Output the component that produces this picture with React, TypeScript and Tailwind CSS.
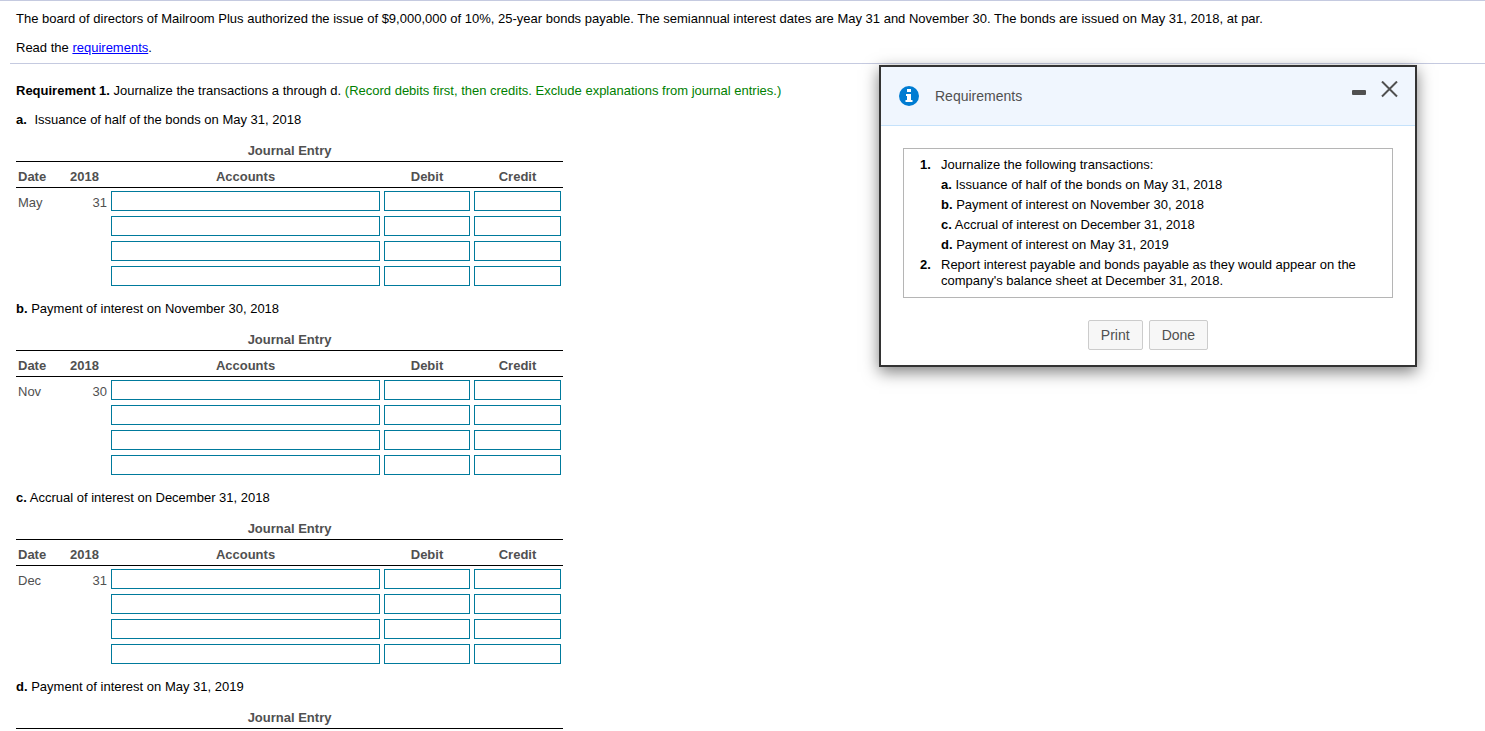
import { useState } from "react";

interface Transaction {
  letter: string;
  text: string;
  month?: string;
  day?: string;
}

// a transaction without a date only gets its title and table heading
const transactions: Transaction[] = [
  { letter: "a", text: "Issuance of half of the bonds on May 31, 2018", month: "May", day: "31" },
  { letter: "b", text: "Payment of interest on November 30, 2018", month: "Nov", day: "30" },
  { letter: "c", text: "Accrual of interest on December 31, 2018", month: "Dec", day: "31" },
  { letter: "d", text: "Payment of interest on May 31, 2019" },
];

const rows = [1, 2, 3, 4];
const columns = ["Account", "Debit", "Credit"];

function JournalEntry({ letter, text, month, day }: Transaction) {
  return (
    <section className="mb-[13px] last:mb-0">
      <h2>
        <b className={letter === "a" ? "mr-1" : ""}>{letter}.</b> {text}
      </h2>
      <table className="mt-[11px] w-[547px] table-fixed border-separate border-spacing-0 text-[#505050]">
        <colgroup>
          <col className="w-[52px]" />
          <col className="w-[41px]" />
          <col className="w-[273px]" />
          <col className="w-[90px]" />
          <col className="w-[91px]" />
        </colgroup>
        <thead>
          <tr>
            <th colSpan={5} className="h-[23px] border-b border-black px-0 pt-0.5 pb-0">
              Journal Entry
            </th>
          </tr>
          {month && (
            <tr>
              <th className="h-[26px] border-b border-black px-0.5 pt-1 text-left">Date</th>
              <th className="border-b border-black px-0.5 pt-1 text-left">2018</th>
              <th className="border-b border-black px-0.5 pt-1">Accounts</th>
              <th className="border-b border-black px-0.5 pt-1">Debit</th>
              <th className="border-b border-black px-0.5 pt-1">Credit</th>
            </tr>
          )}
        </thead>
        {month && (
          <tbody>
            {rows.map((row) => (
              <tr key={row}>
                <td className="h-[25px] px-0.5 pt-1 pb-0">{row === 1 && month}</td>
                <td className="px-0.5 pt-1 pb-0 text-right">{row === 1 && day}</td>
                {columns.map((column) => (
                  <td key={column} className="px-0.5 pt-[3px] pb-0.5">
                    <input
                      type="text"
                      aria-label={`${letter}. ${column}, line ${row}`}
                      className="block h-5 w-full border border-[#007a9c] bg-white px-1 text-black outline-none"
                    />
                  </td>
                ))}
              </tr>
            ))}
          </tbody>
        )}
      </table>
    </section>
  );
}

function RequirementsDialog({ onClose }: { onClose: () => void }) {
  return (
    <div
      role="dialog"
      aria-labelledby="dialog-title"
      className="absolute top-16 right-[68px] w-[538px] border-2 border-[#333] bg-white shadow-[0_5px_15px_rgba(0,0,0,0.5)]"
    >
      <header className="flex h-[59px] items-center border-b border-[#c5e2fb] bg-[#f0f6fe] pr-[17px] pl-[18px] text-[#505050]">
        <svg width="20" height="20" viewBox="0 0 20 20" aria-hidden="true">
          <circle cx="10" cy="10" r="10" fill="#007cd2" />
          <path d="M8 3h4v3H8zM7 8h5v6h1.5v2h-7v-2H8v-4H7z" fill="#fff" />
        </svg>
        <h2 id="dialog-title" className="ml-4 flex-1 text-sm">Requirements</h2>
        <button type="button" aria-label="Minimize" className="mr-[15px]">
          <svg width="14" height="20" viewBox="0 0 14 20">
            <rect x="0" y="4" width="14" height="5" rx="1" fill="#505050" />
          </svg>
        </button>
        <button type="button" aria-label="Close" onClick={onClose}>
          <svg width="17" height="30" viewBox="0 0 17 30">
            <path d="M1 0.5L16 15.5M16 0.5L1 15.5" stroke="#505050" strokeWidth="2" />
          </svg>
        </button>
      </header>
      <div className="px-[22px] pt-[22px] pb-[15px]">
        <ol className="border border-[#b5b5b5] px-4 py-2">
          <li className="flex">
            <b className="w-[21px] shrink-0">1.</b>
            <div className="space-y-1">
              <p>Journalize the following transactions:</p>
              {transactions.map(({ letter, text }) => (
                <p key={letter}>
                  <b>{letter}.</b> {text}
                </p>
              ))}
            </div>
          </li>
          <li className="mt-1 flex">
            <b className="w-[21px] shrink-0">2.</b>
            <p>
              Report interest payable and bonds payable as they would appear on the company's
              balance sheet at December 31, 2018.
            </p>
          </li>
        </ol>
        <div className="mt-[22px] flex justify-center gap-1.5 text-sm text-[#505050]">
          <button type="button" className="h-[30px] rounded-xs border border-[#ccc] bg-[#f7f7f7] px-3">
            Print
          </button>
          <button
            type="button"
            onClick={onClose}
            className="h-[30px] rounded-xs border border-[#ccc] bg-[#f7f7f7] px-3"
          >
            Done
          </button>
        </div>
      </div>
    </div>
  );
}

export default function App() {
  const [open, setOpen] = useState(true);

  return (
    <div className="relative min-h-screen border-t border-[#c5cae0] bg-white font-['Liberation_Sans',Arial,sans-serif] text-[13px] leading-4 text-black">
      <header className="ml-2.5 border-b border-[#c5cae0] px-1.5 pt-2.5 pb-[7px]">
        <p>
          The board of directors of Mailroom Plus authorized the issue of $9,000,000 of 10%, 25-year
          bonds payable. The semiannual interest dates are May 31 and November 30. The bonds are
          issued on May 31, 2018, at par.
        </p>
        <p className="mt-[13px]">
          Read the{" "}
          <a
            href="#requirements"
            onClick={() => setOpen(true)}
            className="text-[#0000ff] underline"
          >
            requirements
          </a>
          .
        </p>
      </header>
      <main className="px-4 pt-[19px]">
        <p className="mb-[13px]">
          <b>Requirement 1.</b> Journalize the transactions a through d.{" "}
          <span className="text-[#008000]">
            (Record debits first, then credits. Exclude explanations from journal entries.)
          </span>
        </p>
        {transactions.map((transaction) => (
          <JournalEntry key={transaction.letter} {...transaction} />
        ))}
      </main>
      {open && <RequirementsDialog onClose={() => setOpen(false)} />}
    </div>
  );
}
